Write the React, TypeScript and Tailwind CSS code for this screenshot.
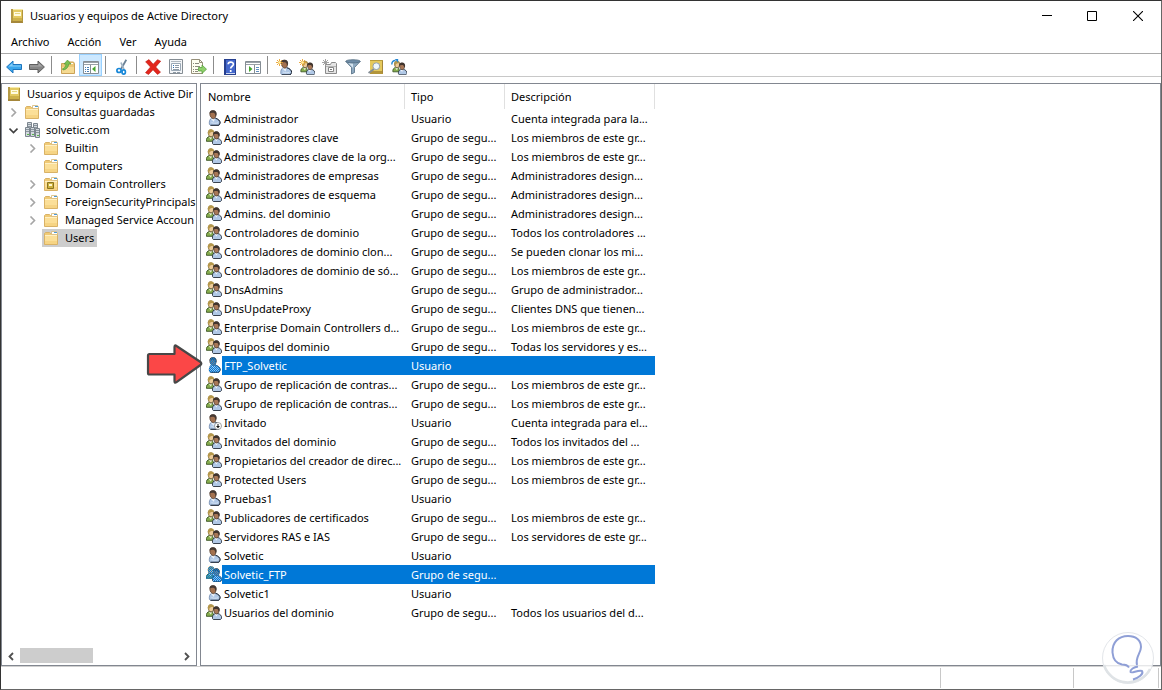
import { useState, type ReactNode } from 'react';
import clsx from 'clsx';

type Kind = 'user' | 'group' | 'disabled';

interface Entry {
  name: string;
  kind: Kind;
  description: string;
}

interface TreeNode {
  label: string;
  level: number;
  icon: ReactNode;
  expander?: 'open' | 'closed';
}

const entries: Entry[] = [
  { name: 'Administrador', kind: 'user', description: 'Cuenta integrada para la...' },
  { name: 'Administradores clave', kind: 'group', description: 'Los miembros de este gr...' },
  { name: 'Administradores clave de la org...', kind: 'group', description: 'Los miembros de este gr...' },
  { name: 'Administradores de empresas', kind: 'group', description: 'Administradores design...' },
  { name: 'Administradores de esquema', kind: 'group', description: 'Administradores design...' },
  { name: 'Admins. del dominio', kind: 'group', description: 'Administradores design...' },
  { name: 'Controladores de dominio', kind: 'group', description: 'Todos los controladores ...' },
  { name: 'Controladores de dominio clon...', kind: 'group', description: 'Se pueden clonar los mi...' },
  { name: 'Controladores de dominio de só...', kind: 'group', description: 'Los miembros de este gr...' },
  { name: 'DnsAdmins', kind: 'group', description: 'Grupo de administrador...' },
  { name: 'DnsUpdateProxy', kind: 'group', description: 'Clientes DNS que tienen...' },
  { name: 'Enterprise Domain Controllers d...', kind: 'group', description: 'Los miembros de este gr...' },
  { name: 'Equipos del dominio', kind: 'group', description: 'Todas los servidores y es...' },
  { name: 'FTP_Solvetic', kind: 'user', description: '' },
  { name: 'Grupo de replicación de contras...', kind: 'group', description: 'Los miembros de este gr...' },
  { name: 'Grupo de replicación de contras...', kind: 'group', description: 'Los miembros de este gr...' },
  { name: 'Invitado', kind: 'disabled', description: 'Cuenta integrada para el...' },
  { name: 'Invitados del dominio', kind: 'group', description: 'Todos los invitados del ...' },
  { name: 'Propietarios del creador de direc...', kind: 'group', description: 'Los miembros de este gr...' },
  { name: 'Protected Users', kind: 'group', description: 'Los miembros de este gr...' },
  { name: 'Pruebas1', kind: 'user', description: '' },
  { name: 'Publicadores de certificados', kind: 'group', description: 'Los miembros de este gr...' },
  { name: 'Servidores RAS e IAS', kind: 'group', description: 'Los servidores de este gr...' },
  { name: 'Solvetic', kind: 'user', description: '' },
  { name: 'Solvetic_FTP', kind: 'group', description: '' },
  { name: 'Solvetic1', kind: 'user', description: '' },
  { name: 'Usuarios del dominio', kind: 'group', description: 'Todos los usuarios del d...' },
];

function Icon({ children }: { children: ReactNode }) {
  return (
    <svg viewBox="0 0 16 16" className="block size-4 shrink-0" aria-hidden="true">
      {children}
    </svg>
  );
}

function BookIcon() {
  return (
    <Icon>
      <path d="M2 1h12v14H2z" fill="#e3ca62" />
      <path d="M2 1h12v1H2z" fill="#f6eaa8" />
      <path d="M2 1h2v14H2z" fill="#b59a45" />
      <path d="M4 10h10v3H4z" fill="#cdb14a" />
      <path d="M2 13h12v2H2z" fill="#a5873a" />
      <path d="M13 2h1v12h-1z" fill="#b3963c" />
      <path d="M5 4h7v4H5z" fill="#fffbe0" />
      <path d="M6 5h5v1H6z" fill="#e6d680" />
    </Icon>
  );
}

function FolderIcon({ badge = false }: { badge?: boolean }) {
  return (
    <Icon>
      <path d="M1.500 3.500l1-1h4l1 1h7v11h-13z" fill="#f0ca75" stroke="#d9b266" />
      <path d="M8.500 1.500h5l1 1v2h-6z" fill="#fff" stroke="#d6b876" strokeWidth=".8" />
      <path d="M11 2h3v1h-3z" fill="#4b9ad8" />
      <path d="M2 5h12v9H2z" fill="#fbdf98" />
      <path d="M2 5h12v1H2z" fill="#fff0c4" />
      <path d="M2 11h12v3H2z" fill="#f6d484" />
      {badge && (
        <>
          <path d="M4.500 6.500h6v6h-6z" fill="#cdb13e" stroke="#8a7420" />
          <path d="M6 8h3v2H6z" fill="#fff7cf" />
        </>
      )}
    </Icon>
  );
}

function Tower({ x, y }: { x: number; y: number }) {
  return (
    <g transform={`translate(${x} ${y})`}>
      <path d="M.500.500h4v9h-4z" fill="#d3d9de" stroke="#7c868f" />
      <path d="M1 2h3v1H1zM1 4h3v1H1z" fill="#8b959e" />
      <path d="M2 7h2v1H2z" fill="#57b947" />
    </g>
  );
}

function DomainIcon() {
  return (
    <Icon>
      <Tower x={3} y={0} />
      <Tower x={9} y={1} />
      <Tower x={1} y={5} />
      <Tower x={6} y={5} />
      <Tower x={11} y={6} />
    </Icon>
  );
}

function UserShape() {
  return (
    <>
      <path
        d="M3.400 14.300c-.4-2.900.2-5.200 2.600-6.400l3 .200c2.800.6 5 2.300 5.100 4.900l-1.300 2.200H4.200z"
        fill="#b0c8e6"
        stroke="#6d87ab"
        strokeWidth=".8"
      />
      <path d="M9.500 8.300c2.700.7 4.700 2.400 4.700 4.700l-1.400 2.300H4.500" fill="none" stroke="#1d2530" />
      <path d="M4.800 8.800L8 12l.8-4z" fill="#eef4fb" />
      <path d="M5.500 12.500c2 1 4.500 1 6.500.2" fill="none" stroke="#d5e3f4" />
      <path d="M3.800 3.500C4 1.500 5 .8 6.800.8c2 0 3.300 1.200 3.300 3.200 0 2.500-1 4.700-2.700 4.700S3.700 6.500 3.800 3.500z" fill="#a3714f" stroke="#4a3527" strokeWidth=".7" />
      <path d="M3.700 3.500C3.500 1.300 4.700.3 7 .3c2.600 0 4 1.700 3.400 4.700l-1 1.500c.1-2.200-.5-3.300-1.900-3.700-1.400-.3-2.700-.2-3.800.7z" fill="#453933" />
    </>
  );
}

function GroupShape() {
  return (
    <>
      <path d="M.400 12.300C0 9.600 1.300 8 3.600 7.300l2.600.2 2 4.800z" fill="#86ad4d" stroke="#35501f" strokeWidth=".9" />
      <path d="M3 8l1.600 2.500L6.500 8z" fill="#e8f2d3" />
      <path d="M2.300 3.700C2.300 2 3.300 1 4.800 1s2.900 1 2.900 2.800c0 2.300-1 4.200-2.600 4.200S2.300 6.100 2.300 3.700z" fill="#eccb9a" stroke="#4d4024" strokeWidth=".8" />
      <path d="M2 5.300C1.300 2.200 2.500.3 5 .3c1.900 0 3 1.100 3.100 2.700L5.300 2.900 3.600 4l-.5 2z" fill="#b5974a" />
      <path d="M6.500 14.500c-.3-2.700.7-4.400 3-5.100l2.300.1c2.600.7 3.900 2.200 3.900 4.600l-1.200 1.400H7.300z" fill="#b0c8e6" stroke="#27303d" strokeWidth=".9" />
      <path d="M8.500 9.800l1.900 2.700 1.400-2.700z" fill="#f4f8fd" />
      <path d="M7.700 5.700C7.700 4 8.800 3 10.300 3s2.900 1 2.900 2.800c0 2.300-1 4.200-2.600 4.200S7.700 8.100 7.700 5.700z" fill="#a87858" stroke="#3d2c20" strokeWidth=".7" />
      <path d="M7.500 6C7 3.700 8 2.300 10.300 2.300c2.400 0 3.700 1.600 3.300 4.200l-1 1.200c-.1-1.800-.6-2.500-1.700-2.700L8.400 5.100z" fill="#40342d" />
    </>
  );
}

const userOutline =
  'M3 14.300c-.4-2.900.4-5 2-6.500C3.500 6 2.800 1 6.800.3c4.200 0 4 4.500 2.700 7.700 3 .8 5 2.600 5 5l-1.600 2.500H4z';
const groupOutline =
  'M0 12.700C-.3 9.600 1.200 8.200 2.800 7.300 1.500 4.800 1.400.5 4.900.3 7 .3 8 1.200 8.300 3c3-1.400 6 .3 5.400 3.800l-1.300 2.700c2.800.8 3.700 2.200 3.600 4.700l-1.300 1.500H7.200l-1-3z';

// Selected icons are dithered with the highlight colour.
function EntryIcon({ kind, selected }: { kind: Kind; selected: boolean }) {
  const outline = kind === 'group' ? groupOutline : userOutline;
  return (
    <Icon>
      {kind === 'group' ? <GroupShape /> : <UserShape />}
      {kind === 'disabled' && (
        <>
          <circle cx="12" cy="12" r="3.500" fill="#fff" stroke="#8a8a8a" strokeWidth=".8" />
          <path d="M11.500 10h1v2H14l-2 2.300-2-2.300h1.500z" fill="#111" />
        </>
      )}
      {selected && (
        <>
          <defs>
            <pattern id={`dither-${kind}`} width="2" height="2" patternUnits="userSpaceOnUse">
              <path d="M0 0h1v1H0zM1 1h1v1H1z" fill="#0078d7" />
            </pattern>
          </defs>
          <path d={outline} fill="#3d9be6" fillOpacity=".3" />
          <path d={outline} fill={`url(#dither-${kind})`} />
        </>
      )}
    </Icon>
  );
}

function Spark() {
  return (
    <>
      <path d="M3.500 0v7M0 3.500h7M1 1l5 5M6 1L1 6" stroke="#e9a12f" strokeWidth=".9" />
      <circle cx="3.500" cy="3.500" r="1.300" fill="#fff2a8" />
    </>
  );
}

const toolbar: { label: string; active?: boolean; icon: ReactNode }[][] = [
  [
    {
      label: 'Atrás',
      icon: (
        <>
          <path d="M.600 8l6.400-6v3.500h8.500v5H7V14z" fill="#3aa6ec" stroke="#1d74bd" strokeLinejoin="round" />
          <path d="M2.500 7.500L6.500 4v2.500H15v1z" fill="#86cdf8" />
        </>
      ),
    },
    {
      label: 'Adelante',
      icon: (
        <>
          <path d="M15.400 8L9 2v3.500H.500v5H9V14z" fill="#868686" stroke="#5f5f5f" strokeLinejoin="round" />
          <path d="M13.500 7.500L9.500 4v2.500H1v1z" fill="#a8a8a8" />
        </>
      ),
    },
  ],
  [
    {
      label: 'Subir un nivel',
      icon: (
        <>
          <path d="M1.500 4.500h5l1-1.500h6l1 1.500v10h-13z" fill="#ecc876" stroke="#cba257" />
          <path d="M2 8h12v6H2z" fill="#f5da92" />
          <path d="M9 4h4v1H9z" fill="#fff" />
          <path d="M2.500 9.800C4.500 9.300 5.700 7.500 6 5H4l3.500-4L11 5H8.800C8.300 8.500 6 10.800 3 11z" fill="#7cc050" stroke="#4a9330" strokeWidth=".6" />
        </>
      ),
    },
    {
      label: 'Mostrar árbol de consola',
      active: true,
      icon: (
        <>
          <path d="M.500 2.500h15v12H.500z" fill="#fff" stroke="#858d94" />
          <path d="M1 3h14v1H1zM1 5h14v1H1z" fill="#99a1a8" />
          <path d="M7 6h1v8H7z" fill="#858d94" />
          <path d="M2 8h1v1H2zM2 10h1v1H2zM2 12h1v1H2zM4 8h2v1H4zM4 10h2v1H4zM4 12h2v1H4z" fill="#4a7fb5" />
          <path d="M12.500 7v6L9 10z" fill="#45a52e" />
        </>
      ),
    },
  ],
  [
    {
      label: 'Cortar',
      icon: (
        <>
          <path d="M12.300.800L7 10" stroke="#6b8296" strokeWidth="1.800" />
          <path d="M7 3.500l3 7" stroke="#9fb2c2" strokeWidth="1.800" />
          <ellipse cx="5" cy="11.500" rx="2.100" ry="2" fill="none" stroke="#1787d8" strokeWidth="1.700" />
          <ellipse cx="9.700" cy="13" rx="1.700" ry="2.100" fill="none" stroke="#1787d8" strokeWidth="1.700" />
        </>
      ),
    },
  ],
  [
    {
      label: 'Eliminar',
      icon: (
        <path
          d="M.600 2.800L4 .6l4.200 4.600L12.500.7l3.200 1.500L10.700 8l4.800 5.200-3 2.200L8 10.800l-4.500 4.700-3-1.800L5.500 8z"
          fill="#e3261c"
          stroke="#b8170f"
          strokeWidth=".6"
        />
      ),
    },
    {
      label: 'Propiedades',
      icon: (
        <>
          <path d="M1.500.500h13v14h-13z" fill="#f4f6f8" stroke="#858d94" />
          <path d="M3 2h10v1H3z" fill="#b0b8bf" />
          <path d="M3.500 4.500h9v7h-9z" fill="#fff" stroke="#9aa8b5" />
          <path d="M5 6h1v1H5zM5 8h1v1H5z" fill="#2a6fb5" />
          <path d="M7 6h4v1H7zM7 8h4v1H7zM5 10h6v1H5zM5 13h3v1H5zM9 13h3v1H9z" fill="#8e9aa5" />
        </>
      ),
    },
    {
      label: 'Exportar lista',
      icon: (
        <>
          <path d="M.500.500h8l3 3v11H.500z" fill="#fffef0" stroke="#96907a" />
          <path d="M8.500.500v3h3" fill="none" stroke="#96907a" />
          <path d="M2 4h1v1H2zM2 7h1v1H2zM2 10h1v1H2zM2 12h1v1H2zM4 4h4v1H4zM4 7h5v1H4zM4 10h3v1H4zM4 12h3v1H4z" fill="#8a8a7c" />
          <path d="M7.500 8.500H11V6l4.500 4.200L11 14.500V12H7.500z" fill="#8fd06c" stroke="#4c9a31" strokeWidth=".7" />
        </>
      ),
    },
  ],
  [
    {
      label: 'Ayuda',
      icon: (
        <>
          <path d="M2 0h12v16H2z" fill="#27408f" />
          <path d="M4 1h9v13H4z" fill="#4468cc" />
          <path d="M4 14h9v1H4z" fill="#cdd8f0" />
          <path d="M6.200 5.300c0-2.800 5.200-3 5.200-.1 0 2-2.700 2.100-2.700 4.300M8.700 11v2" fill="none" stroke="#fff" strokeWidth="1.700" />
        </>
      ),
    },
    {
      label: 'Mostrar panel de acciones',
      icon: (
        <>
          <path d="M.500 2.500h15v12H.500z" fill="#fff" stroke="#858d94" />
          <path d="M1 3h14v1H1zM1 5h14v1H1z" fill="#99a1a8" />
          <path d="M9 6h1v8H9z" fill="#858d94" />
          <path d="M11 8h3v1h-3zM11 10h3v1h-3zM11 12h3v1h-3z" fill="#5f8fc0" />
          <path d="M4 7v6l3.500-3z" fill="#45a52e" />
        </>
      ),
    },
  ],
  [
    {
      label: 'Crear usuario',
      icon: (
        <>
          <g transform="translate(1.500 .5)">
            <UserShape />
          </g>
          <Spark />
        </>
      ),
    },
    {
      label: 'Crear grupo',
      icon: (
        <>
          <g transform="translate(1.500 1.500) scale(.92)">
            <GroupShape />
          </g>
          <Spark />
        </>
      ),
    },
    {
      label: 'Crear unidad organizativa',
      icon: (
        <>
          <path d="M3.500 5.500h5l1-2h4l1 1v10h-11z" fill="#e4e4e4" stroke="#8b8b8b" />
          <path d="M4 7h10v1H4z" fill="#b5b5b5" />
          <path d="M6.500 8.500h5v4h-5z" fill="#fff" stroke="#868686" />
          <path d="M8 10h2v1H8z" fill="#777" />
          <path d="M3.500 0v7M0 3.500h7M1 1l5 5M6 1L1 6" stroke="#999" strokeWidth=".9" />
        </>
      ),
    },
    {
      label: 'Filtro',
      icon: (
        <>
          <path d="M.800 2.500l5.700 6V15l3-1.500v-5l5.700-6z" fill="#8ea9c0" stroke="#526c82" strokeWidth=".8" />
          <path d="M3.500 4l4.500 5V4.500z" fill="#d5e3ee" />
          <ellipse cx="8" cy="2.300" rx="7.200" ry="1.600" fill="#6d8ba6" stroke="#526c82" strokeWidth=".8" />
        </>
      ),
    },
    {
      label: 'Buscar',
      icon: (
        <>
          <path d="M2 1h13v14H2z" fill="#e5c95c" />
          <path d="M2 1h13v1H2z" fill="#b89c3c" />
          <path d="M2 12h13v3H2z" fill="#b3953a" />
          <path d="M14 2h1v12h-1z" fill="#a5873a" />
          <path d="M6 10l-5.500 4" stroke="#858d94" strokeWidth="2" />
          <circle cx="8.300" cy="7.200" r="3.400" fill="#eef7fc" stroke="#93a0aa" />
        </>
      ),
    },
    {
      label: 'Agregar a un grupo',
      icon: (
        <>
          <g transform="translate(1.500 1.500) scale(.92)">
            <GroupShape />
          </g>
          <path d="M.800 5.500C.800 2.500 2.200 1.500 4.500 1.500" fill="none" stroke="#2586d2" strokeWidth="1.400" />
          <path d="M3.800 0h3.400v3.800z" fill="#2586d2" />
        </>
      ),
    },
  ],
];

const tree: TreeNode[] = [
  { label: 'Consultas guardadas', level: 1, icon: <FolderIcon />, expander: 'closed' },
  { label: 'solvetic.com', level: 1, icon: <DomainIcon />, expander: 'open' },
  { label: 'Builtin', level: 2, icon: <FolderIcon />, expander: 'closed' },
  { label: 'Computers', level: 2, icon: <FolderIcon /> },
  { label: 'Domain Controllers', level: 2, icon: <FolderIcon badge />, expander: 'closed' },
  { label: 'ForeignSecurityPrincipals', level: 2, icon: <FolderIcon />, expander: 'closed' },
  { label: 'Managed Service Accoun', level: 2, icon: <FolderIcon />, expander: 'closed' },
  { label: 'Users', level: 2, icon: <FolderIcon /> },
];

function TitleBar() {
  return (
    <header className="flex h-[30px] items-center pl-2">
      <BookIcon />
      <h1 className="ml-[5px] flex-1">Usuarios y equipos de Active Directory</h1>
      <button aria-label="Minimizar" className="flex h-full w-[45px] items-center justify-center">
        <svg viewBox="0 0 10 10" className="size-2.5">
          <path d="M0 4h10v1H0z" />
        </svg>
      </button>
      <button aria-label="Maximizar" className="flex h-full w-[45px] items-center justify-center">
        <svg viewBox="0 0 10 10" className="size-2.5">
          <path d="M.5.5h9v9h-9z" fill="none" stroke="#000" />
        </svg>
      </button>
      <button aria-label="Cerrar" className="flex h-full w-[47px] items-center justify-center">
        <svg viewBox="0 0 10 10" className="size-2.5">
          <path d="M0 0l10 10M10 0L0 10" stroke="#000" strokeWidth="1.100" />
        </svg>
      </button>
    </header>
  );
}

function Toolbar() {
  return (
    <div role="toolbar" className="flex h-6 items-center border-y border-t-[#a9a9a9] border-b-[#c8c8c8] pl-px">
      {toolbar.map((group, i) => (
        <div key={i} className="flex items-center">
          {i > 0 && <span className="mr-1 ml-[3px] h-[18px] w-px bg-[#8c8c8c]" />}
          {group.map((item) => (
            <button
              key={item.label}
              aria-label={item.label}
              className={clsx(
                'flex h-[22px] w-[23px] items-end justify-center',
                item.active ? 'border border-[#99d1ff] bg-[#cce8ff]' : 'pb-px',
              )}
            >
              <Icon>{item.icon}</Icon>
            </button>
          ))}
        </div>
      ))}
    </div>
  );
}

function Tree() {
  const [current, setCurrent] = useState('Users');

  return (
    <nav className="flex w-[196px] shrink-0 flex-col overflow-hidden border border-[#828790]">
      <ul className="flex-1 pt-px">
        <li className="flex h-[18px] items-center pl-1 whitespace-nowrap">
          <BookIcon />
          <span className="ml-[5px]">Usuarios y equipos de Active Dir</span>
        </li>
        {tree.map((node) => (
          <li
            key={node.label}
            className={clsx('flex h-[18px] items-center whitespace-nowrap', node.level === 1 ? 'pl-[7px]' : 'pl-[26px]')}
          >
            <span className="flex w-3.5 shrink-0">
              {node.expander && (
                <svg viewBox="0 0 9 9" className="size-[9px]" fill="none" strokeWidth="1.600">
                  {node.expander === 'open' ? (
                    <path d="M.5 2.500l4 4 4-4" stroke="#404040" />
                  ) : (
                    <path d="M2.500.5l4 4-4 4" stroke="#a6a6a6" />
                  )}
                </svg>
              )}
            </span>
            <button
              onClick={() => setCurrent(node.label)}
              className={clsx('flex h-[18px] items-center gap-1.5 pl-px', current === node.label && 'bg-[#cdcdcd] pr-[3px]')}
            >
              {node.icon}
              {node.label}
            </button>
          </li>
        ))}
      </ul>
      <div className="flex h-[17px] items-start px-[5px]">
        <button aria-label="Desplazar a la izquierda" className="flex h-4 w-[13px] items-center">
          <svg viewBox="0 0 9 9" className="size-[9px]" fill="none">
            <path d="M6 1L2.500 4.500 6 8" stroke="#505050" strokeWidth="1.800" />
          </svg>
        </button>
        <div className="flex-1">
          <div className="h-[15px] w-[73px] bg-[#cdcdcd]" />
        </div>
        <button aria-label="Desplazar a la derecha" className="flex h-4 items-center">
          <svg viewBox="0 0 9 9" className="size-[9px]" fill="none">
            <path d="M3 1l3.500 3.500L3 8" stroke="#505050" strokeWidth="1.800" />
          </svg>
        </button>
      </div>
    </nav>
  );
}

function PointerArrow() {
  return (
    <svg viewBox="0 0 58 42" className="absolute -top-3.5 -left-[55px] z-10 h-[42px] w-[58px]" aria-hidden="true">
      <path
        d="M3.500 12h25V5q0-2.500 2-1L54.500 20q1.500 1.500 0 3L30.500 40.200q-2 1.500-2-1V32.500h-25Q2 32.500 2 31V13.500Q2 12 3.500 12z"
        fill="#fb4747"
        stroke="#474747"
        strokeWidth="2.200"
        strokeLinejoin="round"
      />
    </svg>
  );
}

function EntryTable() {
  const [selected, setSelected] = useState(['FTP_Solvetic', 'Solvetic_FTP']);

  return (
    <main className="min-w-0 flex-1 border border-[#828790]">
      <table className="w-[454px] table-fixed border-separate border-spacing-0 text-left whitespace-nowrap">
        <colgroup>
          <col className="w-[204px]" />
          <col className="w-[100px]" />
          <col className="w-[150px]" />
        </colgroup>
        <thead>
          <tr className="h-[25px]">
            {['Nombre', 'Tipo', 'Descripción'].map((title, i) => (
              <th key={title} className={clsx('border-r border-[#e0e0e0] py-0 font-normal', i === 0 ? 'pl-[7px]' : 'pl-1.5')}>
                {title}
              </th>
            ))}
          </tr>
        </thead>
        <tbody>
          {entries.map((entry, i) => {
            const isSelected = selected.includes(entry.name);
            return (
              <tr key={i} onClick={() => setSelected([entry.name])} className={clsx('h-[19px]', isSelected && 'text-white')}>
                <td className="p-0">
                  <div className="relative flex items-start pl-[5px]">
                    {entry.name === 'FTP_Solvetic' && <PointerArrow />}
                    <span className="pt-px">
                      <EntryIcon kind={entry.kind} selected={isSelected} />
                    </span>
                    <span className={clsx('h-[19px] flex-1 pl-0.5 leading-[19px]', isSelected && 'bg-[#0078d7]')}>{entry.name}</span>
                  </div>
                </td>
                <td className={clsx('px-1.5 py-0', isSelected && 'bg-[#0078d7]')}>
                  {entry.kind === 'group' ? 'Grupo de segu...' : 'Usuario'}
                </td>
                <td className={clsx('px-1.5 py-0', isSelected && 'bg-[#0078d7]')}>{entry.description}</td>
              </tr>
            );
          })}
        </tbody>
      </table>
    </main>
  );
}

function Watermark() {
  return (
    <svg viewBox="0 0 54 54" className="absolute right-1.5 bottom-1 size-[54px]" aria-hidden="true">
      <circle cx="27" cy="27" r="25.500" fill="#fff" fillOpacity=".8" stroke="#e3e6ea" />
      <path d="M3 34a25 25 0 0 0 46 4" fill="none" stroke="#dfe3e6" strokeWidth="2.500" />
      <path
        d="M28 36.500c-1.500-2.500-3.500-3-7-3-6-1-9-6-9.500-12C11 11 18 5 27 5c8 0 13 4.500 13 11 0 6-6 10-4 18"
        fill="none"
        stroke="#8f9fd6"
        strokeWidth="2"
      />
      <path d="M37 35.500c-4 .5-8 3-7.500 5.500.6 2 8-2.500 11.500-1 2 3-3.500 7-9 8.500" fill="none" stroke="#8f9fd6" strokeWidth="2" />
    </svg>
  );
}

export default function App() {
  return (
    <div className="relative flex min-h-screen flex-col border border-t-[#333] border-r-[#666] border-b-[#666] border-l-[#333] bg-white font-['Noto_Sans','Open_Sans',sans-serif] text-[11px] leading-[18px] text-black">
      <TitleBar />
      <nav className="flex h-[22px] items-center gap-[18px] pl-2.5">
        {['Archivo', 'Acción', 'Ver', 'Ayuda'].map((item) => (
          <button key={item}>{item}</button>
        ))}
      </nav>
      <Toolbar />
      <div className="mt-1.5 flex flex-1 gap-[3px]">
        <Tree />
        <EntryTable />
      </div>
      <footer className="flex h-[23px] border-t border-[#d0d0d0] py-px">
        <div className="flex-1 border-r border-[#c8c8c8]" />
        <div className="w-[133px] border-r border-[#c8c8c8]" />
        <div className="mr-0.5 w-[85px] border-r border-[#c8c8c8]" />
      </footer>
      <Watermark />
    </div>
  );
}
